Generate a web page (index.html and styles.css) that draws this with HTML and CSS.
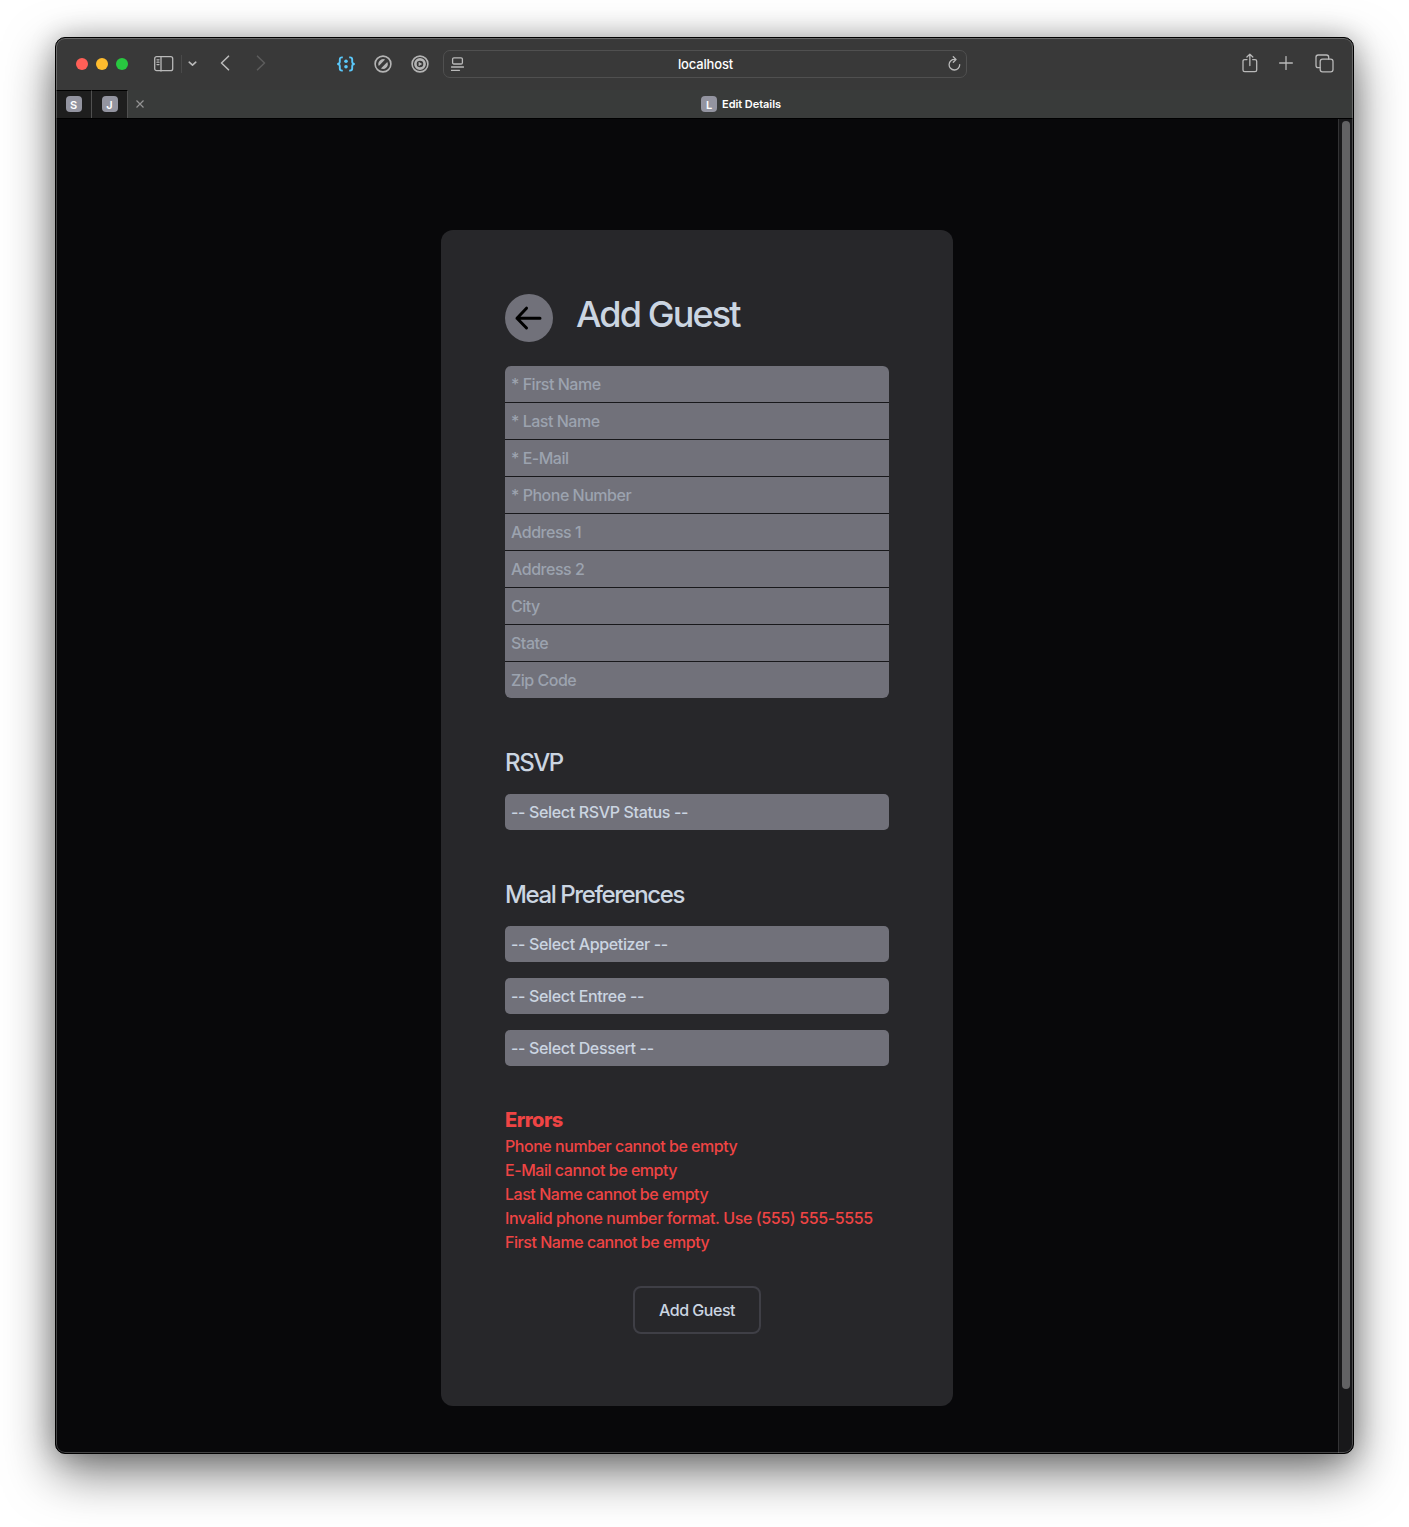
FILE: index.html
```html
<!DOCTYPE html>
<html lang="en">
<head>
<meta charset="utf-8">
<title>Edit Details</title>
<link rel="stylesheet" href="styles.css">
</head>
<body>
<div class="window">
  <header class="toolbar">
    <div class="tools-left">
      <div class="lights"><i class="light red"></i><i class="light yellow"></i><i class="light green"></i></div>
      <svg class="icon sidebar" width="20" height="16" viewBox="0 0 20 16"><rect x=".7" y=".7" width="18" height="14" rx="2"/><path d="M7 1v14M3 3.8h2M3 6.2h2M3 8.6h2"/></svg>
      <span class="divider"></span>
      <svg class="icon caret" width="9" height="6" viewBox="0 0 9 6"><path d="M1.2 1.2 4.5 4.2 7.8 1.2"/></svg>
      <svg class="icon back" width="10" height="16" viewBox="0 0 10 16"><path d="M8.5 1.2 1.5 8l7 6.8"/></svg>
      <svg class="icon forward" width="10" height="16" viewBox="0 0 10 16"><path d="M1.5 1.2 8.5 8l-7 6.8"/></svg>
    </div>
    <div class="extensions">
      <svg class="braces" width="20" height="16" viewBox="0 0 20 16"><path d="M6.8 1.4H6C4.500 1.400 3.800 2.100 3.800 3.500V5.800C3.800 7.200 3 7.900 1.300 8 3 8.100 3.800 8.800 3.800 10.200V12.500C3.800 13.900 4.500 14.600 6 14.600H6.800M13.200 1.400H14C15.500 1.400 16.200 2.100 16.200 3.500V5.800C16.200 7.200 17 7.900 18.700 8 17 8.100 16.200 8.800 16.200 10.200V12.500C16.200 13.900 15.500 14.600 14 14.600H13.200"/><circle cx="10" cy="5.200" r="1.800"/><circle cx="10" cy="10.800" r="1.800"/></svg>
      <svg class="badge" width="18" height="18" viewBox="0 0 18 18"><circle cx="9" cy="9" r="7.900"/><path class="fill" d="M4.800 11.100A4.900 4.900 0 0 1 11.100 4.500ZM6.900 13.500A4.900 4.900 0 0 0 13.300 6.900Z"/></svg>
      <svg class="badge" width="18" height="18" viewBox="0 0 18 18"><circle cx="9" cy="9" r="7.900"/><circle class="ring" cx="9" cy="9" r="4.600"/><path class="fill" d="M7.600 6.800v4.400L11.200 9z"/></svg>
    </div>
    <div class="address">
      <svg class="icon" width="13" height="15" viewBox="0 0 13 15"><rect x="1.600" y=".8" width="9.800" height="6.200" rx="1.300"/><path d="M.5 10h12M.5 13.300h8"/></svg>
      <span class="host">localhost</span>
      <svg class="icon" width="13" height="16" viewBox="0 0 13 16"><path d="M11.700 8.700A5.300 5.300 0 1 1 6.800 3.400M5.300.8 8 3.500 5.300 6.200"/></svg>
    </div>
    <div class="tools-right">
      <svg class="icon" width="16" height="20" viewBox="0 0 16 20"><path d="M5 6.600H2.700Q1 6.600 1 8.300V17Q1 18.700 2.700 18.700H13Q14.700 18.700 14.700 17V8.300Q14.700 6.600 13 6.600H10.700M7.850 12.500V1.200M4.900 4 7.850 1.100 10.800 4"/></svg>
      <svg class="icon" width="14" height="14" viewBox="0 0 14 14"><path d="M7 .6v12.800M.6 7h12.800"/></svg>
      <svg class="icon" width="19" height="19" viewBox="0 0 19 19"><rect x="5.200" y="5.200" width="12.800" height="12.600" rx="2.300"/><path d="M5 13.700H3.200Q1 13.700 1 11.500V3.200Q1 1 3.200 1H11.500Q13.700 1 13.700 3.200V5"/></svg>
    </div>
  </header>
  <nav class="tabs">
    <div class="pinned"><span class="favicon">S</span></div>
    <div class="pinned"><span class="favicon">J</span></div>
    <div class="current">
      <svg class="close" width="8" height="8" viewBox="0 0 8 8"><path d="M.5.5l7 7M7.500.5l-7 7"/></svg>
      <div class="tab-title"><span class="favicon">L</span><span class="tab-name">Edit Details</span></div>
    </div>
  </nav>
  <div class="viewport">
    <main class="page">
      <form class="card">
        <div class="heading">
          <a class="back-button"><svg width="48" height="48" viewBox="0 0 48 48"><path d="M35 24.200H12M21.500 14.200 12 24.200 21.500 34"/></svg></a>
          <h1>Add Guest</h1>
        </div>
        <div class="fields">
          <input placeholder="* First Name">
          <input placeholder="* Last Name">
          <input placeholder="* E-Mail">
          <input placeholder="* Phone Number">
          <input placeholder="Address 1">
          <input placeholder="Address 2">
          <input placeholder="City">
          <input placeholder="State">
          <input placeholder="Zip Code">
        </div>
        <section class="group">
          <h2>RSVP</h2>
          <select><option>-- Select RSVP Status --</option></select>
        </section>
        <section class="group">
          <h2>Meal Preferences</h2>
          <select><option>-- Select Appetizer --</option></select>
          <select><option>-- Select Entree --</option></select>
          <select><option>-- Select Dessert --</option></select>
        </section>
        <section class="errors">
          <h3>Errors</h3>
          <ul>
            <li>Phone number cannot be empty</li>
            <li>E-Mail cannot be empty</li>
            <li>Last Name cannot be empty</li>
            <li class="format">Invalid phone number format. Use (555) 555-5555</li>
            <li>First Name cannot be empty</li>
          </ul>
        </section>
        <button class="submit" type="button">Add Guest</button>
      </form>
    </main>
    <div class="scrollbar"><div class="thumb"></div></div>
  </div>
</div>
</body>
</html>
```
FILE: styles.css
```css
* { box-sizing: border-box; margin: 0; padding: 0; }
body {
  height: 1527px;
  padding: 37px 55px 73px;
  overflow: hidden;
  background: #fff;
  font-family: Inter, "Liberation Sans", sans-serif;
}
svg { display: block; flex: none; }
.window {
  position: relative;
  display: flex;
  flex-direction: column;
  height: 1417px;
  border: 1px solid #000;
  border-radius: 10px;
  overflow: hidden;
  background: #08080a;
  box-shadow: 0 18px 50px rgba(0, 0, 0, .55), 0 0 26px rgba(0, 0, 0, .22);
}
/* light hairline just inside the window edge */
.window::after {
  content: "";
  position: absolute;
  inset: 0;
  border: 1px solid rgba(255, 255, 255, .24);
  border-radius: 9px;
  pointer-events: none;
}
.toolbar {
  display: grid;
  grid-template-columns: 280px 107px 524px 1fr;
  align-items: center;
  height: 52px;
  background: #393939;
}
.icon { fill: none; stroke: #b9b9b9; stroke-width: 1.3; stroke-linecap: round; stroke-linejoin: round; }
.tools-left { display: flex; align-items: center; padding-left: 20px; }
.lights { display: flex; gap: 8px; margin-right: 26px; }
.light { width: 12px; height: 12px; border-radius: 50%; }
.red { background: #ff5f57; }
.yellow { background: #febc2e; }
.green { background: #28c840; }
.divider { width: 1px; height: 18px; margin: 0 6px 0 7px; background: #4a4a4a; }
.sidebar { margin-bottom: 1px; }
.caret { stroke-width: 1.6; margin-right: 23px; }
.back { stroke-width: 1.6; margin-right: 26px; margin-bottom: 2px; }
.forward { stroke: #5c5c5c; stroke-width: 1.6; margin-bottom: 2px; }
.extensions { display: flex; align-items: center; gap: 19px; }
.braces { fill: #5ac8fa; margin-right: -1px; margin-bottom: 1px; }
.braces path { fill: none; stroke: #5ac8fa; stroke-width: 1.9; }
.badge circle { fill: none; stroke: #b4b4b4; stroke-width: 1.6; }
.badge .ring { stroke-width: 2.600; }
.badge .fill { fill: #b4b4b4; }
.address {
  display: flex;
  align-items: center;
  justify-content: space-between;
  height: 28px;
  padding: 0 5px 0 7px;
  border: 1px solid #505050;
  border-radius: 7px;
}
.host { color: #fff; font-size: 13px; font-weight: 500; letter-spacing: -.15px; margin-right: 1px; }
.tools-right { display: flex; align-items: center; justify-content: flex-end; gap: 22px; padding: 0 19px 2px 0; }
.tools-right .icon:first-child { margin-right: -1px; }
.tabs { display: flex; height: 29px; border-bottom: 1px solid #000; background: #393b3a; }
.pinned {
  display: flex;
  align-items: center;
  justify-content: center;
  width: 36px;
  padding-bottom: 1px;
  border-top: 1px solid #000;
  border-right: 1px solid #505050;
  background: #1e1e1e;
}
.favicon {
  width: 16px;
  height: 16px;
  border-radius: 4px;
  background: #9394a0;
  color: #fff;
  font-size: 11px;
  font-weight: 600;
  line-height: 18px;
  text-align: center;
}
.current { display: flex; flex: 1; align-items: center; padding-left: 8px; }
.close { fill: none; stroke: #949494; stroke-width: 1.2; }
.tab-title { display: flex; flex: 1; align-items: center; justify-content: center; gap: 5px; padding-right: 15px; }
.tab-name { color: #fff; font-size: 11px; font-weight: 600; letter-spacing: -.05px; }
.viewport { display: flex; flex: 1; }
.page { flex: 1; padding: 111px 0 0 385px; background: #08080a; }
.card {
  display: flex;
  flex-direction: column;
  width: 512px;
  height: 1176px;
  padding: 64px;
  border-radius: 12px;
  background: #27272a;
}
.heading { display: flex; gap: 23px; margin-bottom: 24px; }
.back-button { width: 48px; height: 48px; border-radius: 50%; background: #71717a; }
.back-button path { fill: none; stroke: #000; stroke-width: 3; stroke-linecap: round; stroke-linejoin: round; }
h1 { color: #cbd5e1; font-size: 36px; font-weight: 450; line-height: 40px; letter-spacing: -1.9px; }
.fields { display: flex; flex-direction: column; gap: 1px; border-radius: 6px; overflow: hidden; background: #18181b; }
input, select {
  width: 100%;
  height: 36px;
  border: 0;
  padding: 0 6px;
  background: #71717a;
  color: #cbd5e1;
  font: 450 16px/24px Inter, "Liberation Sans", sans-serif;
  letter-spacing: -.48px;
}
input::placeholder { color: #9ca3af; opacity: 1; }
select { display: block; appearance: none; border-radius: 5px; letter-spacing: -.35px; }
.group { display: flex; flex-direction: column; gap: 16px; margin-top: 48px; }
h2 { height: 32px; color: #cbd5e1; font-size: 24px; font-weight: 450; line-height: 34px; letter-spacing: -1.4px; }
.errors { margin-top: 40px; color: #ef4444; }
h3 { font-size: 20px; font-weight: 800; line-height: 28px; letter-spacing: -.5px; }
ul { list-style: none; }
li { font-size: 16px; font-weight: 450; line-height: 24px; letter-spacing: -.46px; }
.format { letter-spacing: -.38px; }
.submit {
  align-self: center;
  width: 128px;
  height: 48px;
  margin-top: 32px;
  border: 2px solid #3f3f46;
  border-radius: 8px;
  background: none;
  color: #cbd5e1;
  font: 450 16px/24px Inter, "Liberation Sans", sans-serif;
  letter-spacing: -.48px;
}
.scrollbar { width: 15px; padding: 2px 3px; border-left: 1px solid #333335; background: #18181a; }
.thumb { width: 8px; height: 1268px; border-radius: 4px; background: #626264; }
```
